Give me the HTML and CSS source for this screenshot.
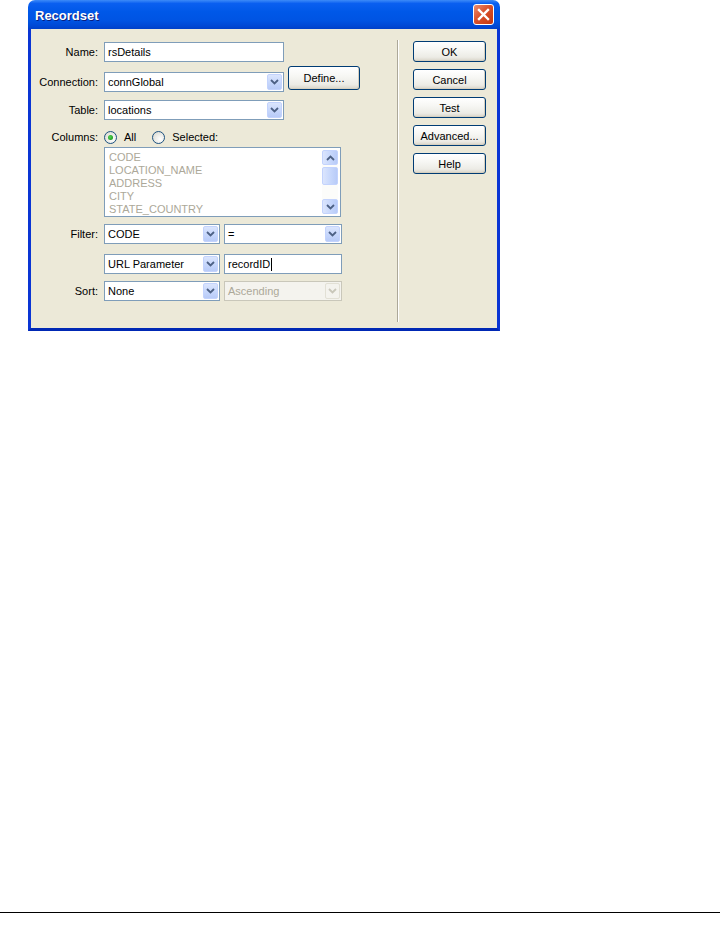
FILE: index.html
```html
<!DOCTYPE html>
<html lang="en">
<head>
    <meta charset="UTF-8">
    <meta name="viewport" content="width=device-width, initial-scale=1.0">
    <link rel="stylesheet" href="styles.css">
    <title>Recordset</title>
</head>
<body>

<div class="dialog">
    <div class="titlebar">
        <span class="title">Recordset</span>
        <span class="close-btn">
            <svg width="13" height="13" viewBox="0 0 13 13"><path d="M2 2 L11 11 M11 2 L2 11" stroke="#fff" stroke-width="2.4" stroke-linecap="square"/></svg>
        </span>
    </div>

    <div class="client">
        <div class="form">
            <div class="row row-name">
                <span class="lbl">Name:</span>
                <div class="textbox w-wide">rsDetails</div>
            </div>

            <div class="row row-conn">
                <span class="lbl">Connection:</span>
                <div class="combo w-wide">
                    <span class="val">connGlobal</span>
                    <span class="arrow"><svg width="9" height="6" viewBox="0 0 9 6"><path d="M1 1 L4.5 4.5 L8 1" fill="none" stroke="#4d6185" stroke-width="1.8"/></svg></span>
                </div>
                <button class="btn btn-define">Define...</button>
            </div>

            <div class="row row-table">
                <span class="lbl">Table:</span>
                <div class="combo w-wide">
                    <span class="val">locations</span>
                    <span class="arrow"><svg width="9" height="6" viewBox="0 0 9 6"><path d="M1 1 L4.5 4.5 L8 1" fill="none" stroke="#4d6185" stroke-width="1.8"/></svg></span>
                </div>
            </div>

            <div class="row row-cols">
                <span class="lbl">Columns:</span>
                <span class="radio checked"></span>
                <span class="radio-text">All</span>
                <span class="radio"></span>
                <span class="radio-text">Selected:</span>
            </div>

            <div class="row row-list">
                <span class="lbl"></span>
                <div class="listbox">
                    <ul class="items">
                        <li>CODE</li>
                        <li>LOCATION_NAME</li>
                        <li>ADDRESS</li>
                        <li>CITY</li>
                        <li>STATE_COUNTRY</li>
                    </ul>
                    <div class="scrollbar">
                        <span class="sb-btn"><svg width="9" height="6" viewBox="0 0 9 6"><path d="M1 5 L4.5 1.5 L8 5" fill="none" stroke="#4d6185" stroke-width="1.8"/></svg></span>
                        <span class="sb-thumb"></span>
                        <span class="sb-track"></span>
                        <span class="sb-btn"><svg width="9" height="6" viewBox="0 0 9 6"><path d="M1 1 L4.5 4.5 L8 1" fill="none" stroke="#4d6185" stroke-width="1.8"/></svg></span>
                    </div>
                </div>
            </div>

            <div class="row row-filter">
                <span class="lbl">Filter:</span>
                <div class="combo w-left">
                    <span class="val">CODE</span>
                    <span class="arrow"><svg width="9" height="6" viewBox="0 0 9 6"><path d="M1 1 L4.5 4.5 L8 1" fill="none" stroke="#4d6185" stroke-width="1.8"/></svg></span>
                </div>
                <div class="combo w-right">
                    <span class="val">=</span>
                    <span class="arrow"><svg width="9" height="6" viewBox="0 0 9 6"><path d="M1 1 L4.5 4.5 L8 1" fill="none" stroke="#4d6185" stroke-width="1.8"/></svg></span>
                </div>
            </div>

            <div class="row row-param">
                <span class="lbl"></span>
                <div class="combo w-left">
                    <span class="val">URL Parameter</span>
                    <span class="arrow"><svg width="9" height="6" viewBox="0 0 9 6"><path d="M1 1 L4.5 4.5 L8 1" fill="none" stroke="#4d6185" stroke-width="1.8"/></svg></span>
                </div>
                <div class="textbox w-right">recordID<span class="caret"></span></div>
            </div>

            <div class="row row-sort">
                <span class="lbl">Sort:</span>
                <div class="combo w-left">
                    <span class="val">None</span>
                    <span class="arrow"><svg width="9" height="6" viewBox="0 0 9 6"><path d="M1 1 L4.5 4.5 L8 1" fill="none" stroke="#4d6185" stroke-width="1.8"/></svg></span>
                </div>
                <div class="combo w-right disabled">
                    <span class="val">Ascending</span>
                    <span class="arrow"><svg width="9" height="6" viewBox="0 0 9 6"><path d="M1 1 L4.5 4.5 L8 1" fill="none" stroke="#c9c7ba" stroke-width="1.8"/></svg></span>
                </div>
            </div>
        </div>

        <div class="separator"></div>

        <div class="side-buttons">
            <button class="btn">OK</button>
            <button class="btn">Cancel</button>
            <button class="btn">Test</button>
            <button class="btn">Advanced...</button>
            <button class="btn">Help</button>
        </div>
    </div>
</div>

<div class="page-rule"></div>

</body>
</html>
```

FILE: styles.css
```css
body {
    margin: 0;
    background-color: #fff;
    font-family: "Liberation Sans", Arial, sans-serif;
    font-size: 11px;
    color: #000;
}

/* Dialog frame */
.dialog {
    width: 472px;
    margin-left: 28px;
}

.titlebar {
    height: 29px;
    display: flex;
    align-items: center;
    justify-content: space-between;
    padding: 0 6px 0 7px;
    box-sizing: border-box;
    border-radius: 7px 7px 0 0;
    background: linear-gradient(#3d8bf8 0%, #0a5ff0 12%, #0058e8 40%, #0054e3 70%, #0048d4 90%, #0040c8 100%);
}

.title {
    color: #fff;
    font-weight: bold;
    font-size: 13px;
    text-shadow: 1px 1px 0 #0a1e80;
    padding-top: 1px;
}

.close-btn {
    width: 19px;
    height: 19px;
    display: flex;
    align-items: center;
    justify-content: center;
    border: 1px solid #fff;
    border-radius: 3px;
    background: linear-gradient(135deg, #eb8e72 0%, #d9512c 45%, #c4360f 100%);
}

.client {
    height: 299px;
    display: flex;
    background-color: #ece9d8;
    border: 3px solid #0a35d4;
    border-top: none;
    border-bottom-color: #0028b4;
}

/* Left form */
.form {
    width: 366px;
    padding-top: 13px;
    box-sizing: border-box;
}

.row {
    display: flex;
    align-items: center;
    height: 20px;
}

.lbl {
    width: 67px;
    margin-right: 6px;
    text-align: right;
    flex-shrink: 0;
}

.row-conn { margin-top: 10px; }
.row-table { margin-top: 8px; }
.row-cols { margin-top: 8px; height: 18px; }
.row-list { margin-top: 1px; height: 70px; align-items: flex-start; }
.row-filter { margin-top: 7px; }
.row-param { margin-top: 10px; }
.row-sort { margin-top: 7px; }

.w-wide { width: 180px; }
.w-left { width: 116px; }
.w-right { width: 118px; margin-left: 4px; }

.textbox {
    height: 20px;
    box-sizing: border-box;
    border: 1px solid #7f9db9;
    background-color: #fff;
    padding: 0 3px;
    display: flex;
    align-items: center;
}

.caret {
    width: 1px;
    height: 13px;
    background-color: #000;
    margin-left: 1px;
}

.combo {
    height: 20px;
    box-sizing: border-box;
    border: 1px solid #7f9db9;
    background-color: #fff;
    display: flex;
    align-items: center;
    padding: 1px;
}

.combo .val {
    flex: 1;
    padding-left: 2px;
}

.arrow {
    width: 15px;
    height: 16px;
    display: flex;
    align-items: center;
    justify-content: center;
    border: 1px solid #c3d3fd;
    border-radius: 2px;
    box-sizing: border-box;
    background: linear-gradient(#dbe5fd 0%, #c8d8fc 50%, #b8cbf8 100%);
}

.combo.disabled {
    border-color: #c9c7ba;
    background-color: #f4f3ee;
    color: #aca899;
}

.combo.disabled .arrow {
    background: #f4f3ee;
    border-color: #e2e0d5;
}

/* Radios */
.radio {
    width: 13px;
    height: 13px;
    box-sizing: border-box;
    border: 1px solid #1c5180;
    border-radius: 50%;
    background: radial-gradient(circle at 65% 65%, #fff 0%, #e6e6e0 60%, #d4d2c6 100%);
    display: flex;
    align-items: center;
    justify-content: center;
    margin-top: 1px;
}

.radio.checked::after {
    content: "";
    width: 5px;
    height: 5px;
    border-radius: 50%;
    background: radial-gradient(circle at 40% 40%, #55d355 0%, #21a121 70%);
}

.radio-text {
    margin-left: 7px;
    margin-right: 16px;
}

/* Listbox */
.listbox {
    width: 237px;
    height: 70px;
    box-sizing: border-box;
    border: 1px solid #7f9db9;
    background-color: #fff;
    display: flex;
    padding: 2px;
}

.items {
    list-style: none;
    margin: 0;
    padding: 1px 0 0 2px;
    flex: 1;
    color: #aca899;
    line-height: 13px;
}

.scrollbar {
    width: 16px;
    display: flex;
    flex-direction: column;
    background-color: #fcfcfa;
}

.sb-btn {
    height: 15px;
    display: flex;
    align-items: center;
    justify-content: center;
    border: 1px solid #c3d3fd;
    border-radius: 2px;
    box-sizing: border-box;
    background: linear-gradient(90deg, #dbe5fd 0%, #c8d8fc 50%, #b8cbf8 100%);
}

.sb-thumb {
    height: 18px;
    margin-top: 2px;
    box-sizing: border-box;
    border: 1px solid #c3d3fd;
    border-radius: 2px;
    background: linear-gradient(90deg, #dbe5fd 0%, #c8d8fc 50%, #b8cbf8 100%);
}

.sb-track {
    flex: 1;
}

/* Buttons */
.btn {
    font-family: "Liberation Sans", Arial, sans-serif;
    font-size: 11px;
    color: #000;
    width: 73px;
    height: 21px;
    padding: 0;
    border: 1px solid #003c74;
    border-radius: 3px;
    background: linear-gradient(#ffffff 0%, #f7f7f4 40%, #ecebe5 80%, #d8d4c8 100%);
    box-shadow: inset -1px -1px 0 #d6d0c0;
}

.btn-define {
    width: 72px;
    height: 24px;
    margin-left: 4px;
    align-self: flex-start;
    margin-top: -6px;
}

.separator {
    width: 1px;
    margin: 11px 0 6px 0;
    background-color: #aca899;
    border-right: 1px solid #fff;
}

.side-buttons {
    display: flex;
    flex-direction: column;
    gap: 7px;
    margin-left: 14px;
    padding-top: 12px;
}

/* Rule at page bottom */
.page-rule {
    margin-top: 581px;
    height: 1px;
    background-color: #000;
}
```
